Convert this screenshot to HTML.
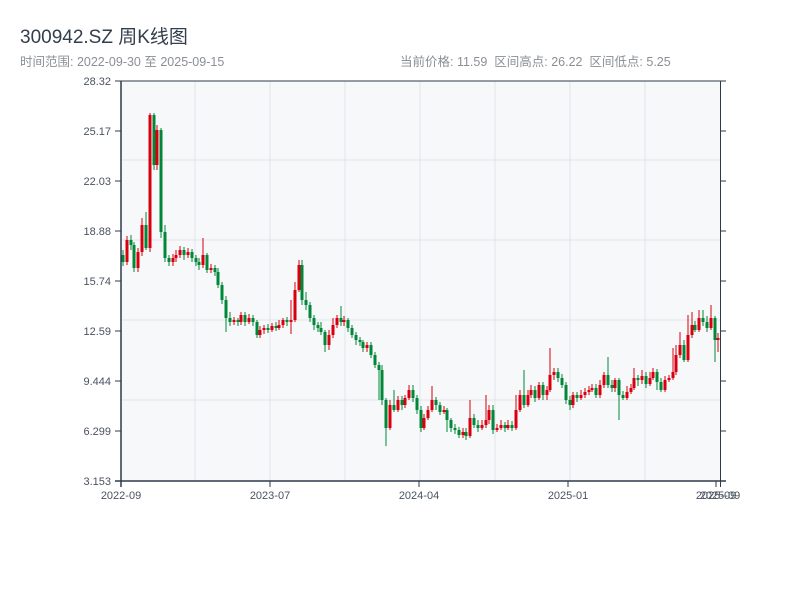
<!DOCTYPE html>
<html><head><meta charset="utf-8"><style>
body{margin:0;width:800px;height:600px;background:#fff;overflow:hidden;font-family:"Liberation Sans","Noto Sans CJK SC",sans-serif}
.t{position:absolute;left:20px;top:22px;font-size:19px;color:#333e4d}
.s{position:absolute;top:51px;font-size:12.5px;color:#8a8f96}
svg{position:absolute;left:0;top:0}
</style></head><body>
<div class="t">300942.SZ 周K线图</div>
<div class="s" style="left:20px">时间范围: 2022-09-30 至 2025-09-15</div>
<div class="s" style="left:400px">当前价格: 11.59&nbsp;&nbsp;区间高点: 26.22&nbsp;&nbsp;区间低点: 5.25</div>
<svg width="800" height="600" font-family="Liberation Sans, sans-serif" font-size="11">
<rect x="121" y="81" width="599" height="400" fill="#f7f8fa"/>
<g stroke="#e1e3e8">
<line x1="195" y1="81" x2="195" y2="481"/><line x1="270" y1="81" x2="270" y2="481"/><line x1="345" y1="81" x2="345" y2="481"/><line x1="420" y1="81" x2="420" y2="481"/><line x1="495" y1="81" x2="495" y2="481"/><line x1="570" y1="81" x2="570" y2="481"/><line x1="645" y1="81" x2="645" y2="481"/>
<line x1="121" y1="160" x2="720" y2="160"/><line x1="121" y1="240" x2="720" y2="240"/><line x1="121" y1="320" x2="720" y2="320"/><line x1="121" y1="400" x2="720" y2="400"/>
</g>
<g stroke="#2e3a4a">
<path d="M115 81H121M115 131H121M115 181H121M115 231H121M115 281H121M115 331H121M115 381H121M115 431H121M115 481H121M720 81H726M720 131H726M720 181H726M720 231H726M720 281H726M720 331H726M720 381H726M720 431H726M720 481H726M121 481V487M270 481V487M419 481V487M568 481V487M716 481V487"/>
</g>
<g fill="#4a5260" text-anchor="end">
<text x="111" y="85">28.32</text><text x="111" y="135">25.17</text><text x="111" y="185">22.03</text><text x="111" y="235">18.88</text><text x="111" y="285">15.74</text><text x="111" y="335">12.59</text><text x="111" y="385">9.444</text><text x="111" y="435">6.299</text><text x="111" y="485">3.153</text>
</g>
<g fill="#4a5260" text-anchor="middle">
<text x="121" y="499">2022-09</text><text x="270" y="499">2023-07</text><text x="419" y="499">2024-04</text><text x="568" y="499">2025-01</text><text x="716" y="499">2025-09</text><text x="720" y="499">2025-09</text>
</g>
<path stroke="#d9000e" stroke-width="1" fill="none" d="M127 236V265M138 248V272M142 218V256M150 113V252M157 125V170M173 254V266M176 250V262M180 246V258M188 248V258M203 238V268M211 264V273M234 317V325M241 312V325M249 314V324M260 326V338M264 325V334M272 323V332M279 320V330M283 318V328M291 300V334M295 282V322M299 260V292M329 330V350M333 318V338M337 315V328M344 316V326M367 342V352M390 400V430M398 396V412M405 395V408M409 385V400M424 414V430M428 406V420M432 386V412M444 406V414M463 428V438M470 400V438M482 420V430M486 395V428M489 405V424M497 424V432M501 420V430M508 420V430M516 395V430M520 390V412M528 390V407M531 385V398M539 382V400M547 386V400M550 348V392M554 368V380M573 392V408M581 390V400M585 388V398M589 386V395M592 384V392M600 380V398M604 372V388M615 378V392M627 386V400M631 384V394M634 368V390M642 370V384M650 372V386M653 368V380M665 376V392M669 375V382M673 348V380M676 345V375M680 332V358M688 315V362M692 312V338M699 310V332M711 305V330M718 333V352"/>
<path stroke="#d9000e" stroke-width="3" fill="none" d="M127 240V262M138 252V268M142 225V252M150 115V248M157 130V165M173 258V262M176 255V258M180 250V255M188 252V255M203 255V265M211 268V270M234 320V322M241 315V322M249 318V322M260 330V335M264 328V330M272 326V330M279 325V328M283 320V325M291 320V322M295 290V320M299 265V290M329 335V345M333 325V335M337 318V325M344 320V322M367 345V348M390 405V428M398 400V410M405 398V405M409 390V398M424 418V428M428 410V418M432 400V410M444 410V412M463 432V435M470 418V436M482 425V428M486 420V425M489 410V420M497 428V430M501 425V428M508 425V428M516 410V428M520 395V410M528 395V405M531 390V395M539 385V398M547 390V395M550 375V390M554 372V375M573 395V405M581 395V398M585 392V395M589 390V392M592 388V390M600 385V395M604 375V385M615 380V388M627 392V398M631 388V392M634 378V388M642 376V380M650 378V384M653 372V378M665 380V390M669 378V380M673 372V378M676 355V372M680 345V355M688 335V360M692 325V335M699 318V330M711 318V328M718 338V340"/>
<path stroke="#00873a" stroke-width="1" fill="none" d="M123 250V266M131 235V250M134 242V272M146 212V250M154 113V170M161 128V238M165 225V262M169 255V266M184 247V260M192 249V262M196 255V266M199 258V270M207 253V273M215 265V276M218 268V288M222 282V304M226 296V332M230 312V326M238 318V326M245 312V326M253 315V326M257 320V338M268 324V333M276 322V331M287 317V326M302 260V305M306 292V310M310 302V322M314 315V330M318 322V332M321 322V335M325 330V352M341 306V326M348 318V332M352 325V338M356 332V345M360 337V346M363 340V352M371 342V358M375 352V368M379 362V400M382 365V405M386 398V446M394 390V412M402 396V410M413 385V402M417 395V414M421 406V432M436 397V410M440 402V415M447 408V432M451 418V432M455 424V434M459 427V438M466 428V440M474 414V428M478 420V432M493 405V434M505 422V432M512 421V431M524 370V408M535 386V402M543 382V400M558 368V382M562 374V388M566 382V404M570 396V410M577 392V402M596 384V398M608 357V388M612 380V392M619 378V420M623 391V400M638 375V386M646 372V388M657 369V390M661 378V392M684 340V362M695 321V332M703 310V326M707 316V332M715 316V362"/>
<path stroke="#00873a" stroke-width="3" fill="none" d="M123 255V262M131 240V245M134 245V268M146 225V248M154 115V165M161 130V232M165 232V258M169 258V262M184 250V255M192 252V258M196 258V262M199 262V265M207 255V270M215 268V272M218 272V285M222 285V300M226 300V318M230 318V322M238 320V322M245 315V322M253 318V322M257 322V335M268 328V330M276 326V328M287 320V322M302 265V300M306 300V305M310 305V318M314 318V325M318 325V328M321 328V332M325 332V345M341 318V322M348 320V328M352 328V335M356 335V340M360 340V342M363 342V348M371 345V355M375 355V365M379 365V370M382 370V400M386 400V428M394 405V410M402 400V405M413 390V398M417 398V410M421 410V428M436 400V405M440 405V412M447 410V420M451 420V428M455 428V430M459 430V435M466 432V436M474 418V425M478 425V428M493 410V430M505 425V428M512 425V428M524 395V405M535 390V398M543 385V395M558 372V378M562 378V385M566 385V400M570 400V405M577 395V398M596 388V395M608 375V385M612 385V388M619 380V395M623 395V398M638 378V380M646 376V384M657 372V382M661 382V390M684 345V360M695 325V330M703 318V322M707 322V328M715 318V340"/>
<g stroke="#2e3a4a" fill="none">
<line x1="115" y1="81" x2="726" y2="81"/>
<line x1="115" y1="481" x2="726" y2="481" stroke-width="1.5"/>
<line x1="121" y1="81" x2="121" y2="487" stroke-width="1.5"/>
<line x1="720.5" y1="81" x2="720.5" y2="487"/>
</g>
</svg>
</body></html>
